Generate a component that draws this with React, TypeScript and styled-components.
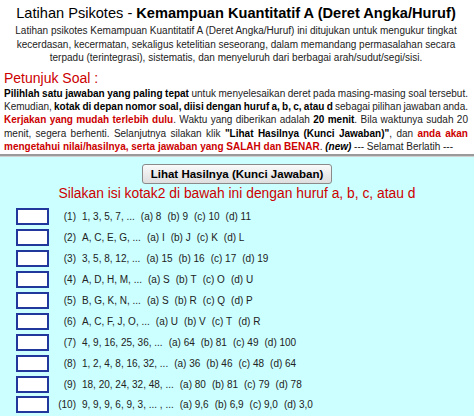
import React from "react";
import styled, { createGlobalStyle } from "styled-components";

const Global = createGlobalStyle`
  html, body { margin: 0; padding: 0; background: #ffffff; }
  body { font-family: Arial, "Liberation Sans", sans-serif; color: #222; }
`;

const Page = styled.div`
  width: 474px;
  display: flex;
  flex-direction: column;
`;

const Top = styled.section`
  padding: 3px 6px 0 4px;
  display: flex;
  flex-direction: column;
`;

const Title = styled.h1`
  margin: 0;
  font-size: 14.6px;
  line-height: 20px;
  font-weight: normal;
  color: #000;
  text-align: center;
  b { font-weight: bold; }
`;

const Desc = styled.p`
  margin: 1px 0 0 0;
  font-size: 10px;
  line-height: 13.5px;
  text-align: center;
  color: #222;
`;

const Heading = styled.h2`
  margin: 4px 0 0 0;
  font-size: 14px;
  line-height: 18px;
  font-weight: normal;
  color: #cc0000;
`;

const Para = styled.div`
  font-size: 10px;
  line-height: 13.4px;
  color: #222;
  display: flex;
  flex-direction: column;
  b { font-weight: bold; color: #000; }
`;

const Line = styled.div<{ $justify?: boolean }>`
  text-align: ${(p) => (p.$justify ? "justify" : "left")};
  text-align-last: ${(p) => (p.$justify ? "justify" : "left")};
  word-spacing: ${(p) => (p.$justify ? "-1px" : "0")};
  white-space: nowrap;
`;

const Red = styled.b`
  color: #cc0000 !important;
`;

const Sep = styled.hr`
  margin: 0;
  border: none;
  border-top: 2px solid #9a9a9a;
  border-bottom: 1px solid #d0d0d0;
  height: 0;
`;

const Quiz = styled.section`
  background: #ccffff;
  padding: 7px 0 10px 0;
  display: flex;
  flex-direction: column;
  align-items: center;
`;

const Button = styled.button`
  font-family: Arial, "Liberation Sans", sans-serif;
  font-size: 11.5px;
  font-weight: bold;
  color: #000;
  height: 20px;
  padding: 0 8px;
  border: 1px solid #8a8a8a;
  border-radius: 3px;
  background: linear-gradient(#fafafa, #dedede);
  line-height: 18px;
`;

const Prompt = styled.h3`
  margin: 0;
  font-size: 13.85px;
  line-height: 18px;
  color: #cc0000;
  font-weight: normal;
`;

const Rows = styled.div`
  align-self: stretch;
  margin-top: 5px;
  padding-left: 16px;
  display: grid;
  grid-template-columns: 33px 27px auto;
  grid-auto-rows: 20.9px;
  align-items: center;
`;

const Box = styled.input`
  box-sizing: border-box;
  width: 33px;
  height: 17px;
  margin: 0;
  padding: 0;
  border: 2px solid #22379b;
  background: #fff;
`;

const Num = styled.span`
  font-size: 10px;
  text-align: right;
  color: #222;
`;

const Items = styled.span`
  display: flex;
  gap: 6px;
  padding-left: 6px;
  font-size: 10px;
  color: #222;
  white-space: nowrap;
`;

const data: [string, string[]][] = [
  ["1, 3, 5, 7, ...", ["8", "9", "10", "11"]],
  ["A, C, E, G, ...", ["I", "J", "K", "L"]],
  ["3, 5, 8, 12, ...", ["15", "16", "17", "19"]],
  ["A, D, H, M, ...", ["S", "T", "O", "U"]],
  ["B, G, K, N, ...", ["S", "R", "Q", "P"]],
  ["A, C, F, J, O, ...", ["U", "V", "T", "R"]],
  ["4, 9, 16, 25, 36, ...", ["64", "81", "49", "100"]],
  ["1, 2, 4, 8, 16, 32, ...", ["36", "46", "48", "64"]],
  ["18, 20, 24, 32, 48, ...", ["80", "81", "79", "78"]],
  ["9, 9, 9, 6, 9, 3, ... , ...", ["9,6", "6,9", "9,0", "3,0"]],
];

const letters = ["a", "b", "c", "d"];

export default function App() {
  return (
    <Page>
      <Global />
      <Top>
        <Title>
          Latihan Psikotes - <b>Kemampuan Kuantitatif A (Deret Angka/Huruf)</b>
        </Title>
        <Desc>
          Latihan psikotes Kemampuan Kuantitatif A (Deret Angka/Huruf) ini ditujukan untuk mengukur tingkat
          <br />
          kecerdasan, kecermatan, sekaligus ketelitian seseorang, dalam memandang permasalahan secara
          <br />
          terpadu (terintegrasi), sistematis, dan menyeluruh dari berbagai arah/sudut/segi/sisi.
        </Desc>
        <Heading>Petunjuk Soal :</Heading>
        <Para>
          <Line $justify>
            <b>Pilihlah satu jawaban yang paling tepat</b> untuk menyelesaikan deret pada masing-masing soal tersebut.
          </Line>
          <Line $justify>
            Kemudian, <b>kotak di depan nomor soal, diisi dengan huruf a, b, c, atau d</b> sebagai pilihan jawaban anda.
          </Line>
          <Line $justify>
            <Red>Kerjakan yang mudah terlebih dulu</Red>. Waktu yang diberikan adalah <b>20 menit</b>. Bila waktunya sudah 20
          </Line>
          <Line $justify>
            menit, segera berhenti. Selanjutnya silakan klik <b>"Lihat Hasilnya (Kunci Jawaban)"</b>, dan <Red>anda akan</Red>
          </Line>
          <Line>
            <Red>mengetahui nilai/hasilnya, serta jawaban yang SALAH dan BENAR</Red>. <b><i>(new)</i></b> --- Selamat Berlatih ---
          </Line>
        </Para>
      </Top>
      <Sep />
      <Quiz>
        <Button type="button">Lihat Hasilnya (Kunci Jawaban)</Button>
        <Prompt>Silakan isi kotak2 di bawah ini dengan huruf a, b, c, atau d</Prompt>
        <Rows>
          {data.map(([seq, opts], i) => (
            <React.Fragment key={i}>
              <Box type="text" aria-label={`Soal ${i + 1}`} />
              <Num>({i + 1})</Num>
              <Items>
                <span>{seq}</span>
                {opts.map((o, j) => (
                  <span key={j}>
                    ({letters[j]}) {o}
                  </span>
                ))}
              </Items>
            </React.Fragment>
          ))}
        </Rows>
      </Quiz>
    </Page>
  );
}
